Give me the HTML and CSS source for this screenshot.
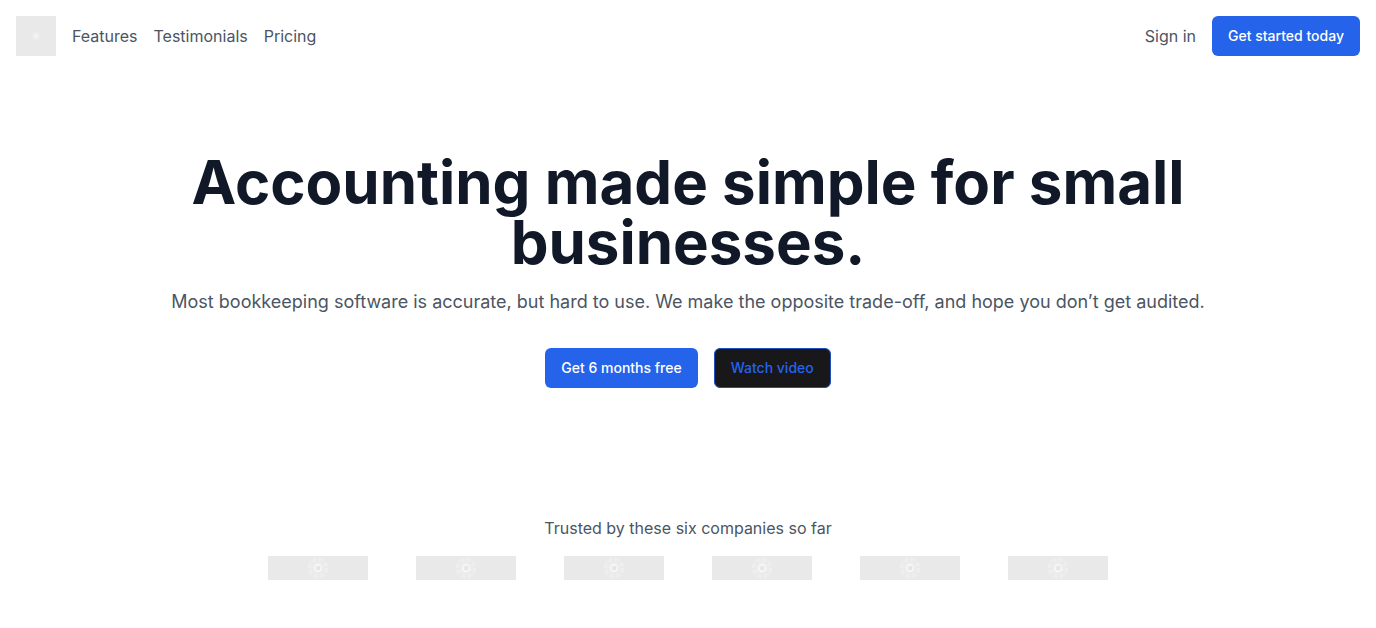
FILE: index.html
```html
<!DOCTYPE html>
<html lang="en">
<head>
<meta charset="utf-8">
<meta name="viewport" content="width=device-width, initial-scale=1">
<title>Accounting made simple for small businesses</title>
<link rel="stylesheet" href="styles.css">
</head>
<body>
<svg class="defs" aria-hidden="true">
  <symbol id="mark" viewBox="0 0 24 24">
    <g fill="none">
      <circle cx="12" cy="12" r="8" stroke="#ededed" stroke-width="5" stroke-dasharray="4.700 1.580"/>
      <circle cx="12" cy="12" r="9.500" stroke="#f0f0f0" stroke-width="1" stroke-dasharray="4.500 2.960"/>
      <circle cx="12" cy="12" r="3.500" stroke="#f6f6f6" stroke-width="2"/>
      <path d="M12 13.500L14 10.500" stroke="#dedede"/>
    </g>
  </symbol>
  <symbol id="dot" viewBox="0 0 8 8">
    <circle cx="4" cy="4" r="4" fill="#ededed"/>
    <circle cx="4" cy="4" r="2" fill="#f2f2f2"/>
  </symbol>
</svg>
<header class="header">
  <nav class="nav" aria-label="Main">
    <a class="brand" href="#" aria-label="Home"><svg class="brand-mark" aria-hidden="true"><use href="#dot"/></svg></a>
    <a class="link" href="#features">Features</a>
    <a class="link" href="#testimonials">Testimonials</a>
    <a class="link" href="#pricing">Pricing</a>
  </nav>
  <div class="nav">
    <a class="link" href="#signin">Sign in</a>
    <button class="button" type="button">Get started today</button>
  </div>
</header>
<main>
  <section class="hero">
    <h1 class="title">Accounting made simple for small businesses.</h1>
    <p class="lead">Most bookkeeping software is accurate, but hard to use. We make the opposite trade-off, and hope you don’t get audited.</p>
    <div class="actions">
      <button class="button" type="button">Get 6 months free</button>
      <button class="button button-outline" type="button">Watch video</button>
    </div>
  </section>
  <section class="trusted">
    <p class="caption">Trusted by these six companies so far</p>
    <ul class="logos">
      <li class="logo"><svg class="logo-mark" aria-hidden="true"><use href="#mark"/></svg></li>
      <li class="logo"><svg class="logo-mark" aria-hidden="true"><use href="#mark"/></svg></li>
      <li class="logo"><svg class="logo-mark" aria-hidden="true"><use href="#mark"/></svg></li>
      <li class="logo"><svg class="logo-mark" aria-hidden="true"><use href="#mark"/></svg></li>
      <li class="logo"><svg class="logo-mark" aria-hidden="true"><use href="#mark"/></svg></li>
      <li class="logo"><svg class="logo-mark" aria-hidden="true"><use href="#mark"/></svg></li>
    </ul>
  </section>
</main>
</body>
</html>
```
FILE: styles.css
```css
* { box-sizing: border-box; }
body { margin: 0; background: #fff; color: #4b5563; font: 16px/24px Inter, sans-serif; }
.defs { display: none; }
.header { display: flex; align-items: center; justify-content: space-between; padding: 16px; }
.nav { display: flex; align-items: center; gap: 16px; }
.brand, .logo { display: flex; align-items: center; justify-content: center; background: #e9e9e9; }
.brand { width: 40px; height: 40px; }
.brand-mark { width: 8px; height: 8px; }
.link { color: inherit; text-decoration: none; }
.button { height: 40px; padding: 0 16px; border: 0; border-radius: 6px; background: #2563eb; color: #fff; font: 500 14px/20px Inter, sans-serif; }
.button-outline { border: 1px solid #1e4fbd; background: #18181b; color: #2563eb; }
.hero { display: flex; flex-direction: column; align-items: center; padding: 80px 16px; text-align: center; }
.title { max-width: 1024px; margin: 0; color: #111827; font-size: 60px; line-height: 60px; font-weight: 700; }
.lead { margin: 16px 0 0; font-size: 18px; line-height: 28px; }
.actions { display: flex; flex-wrap: wrap; gap: 16px; margin-top: 32px; }
.trusted { padding: 48px 16px; text-align: center; }
.caption { margin: 0; }
.logos { display: flex; flex-wrap: wrap; justify-content: center; gap: 16px 48px; margin: 16px 0 0; padding: 0; list-style: none; }
.logo { width: 100px; height: 24px; }
.logo-mark { width: 24px; height: 24px; }
```
